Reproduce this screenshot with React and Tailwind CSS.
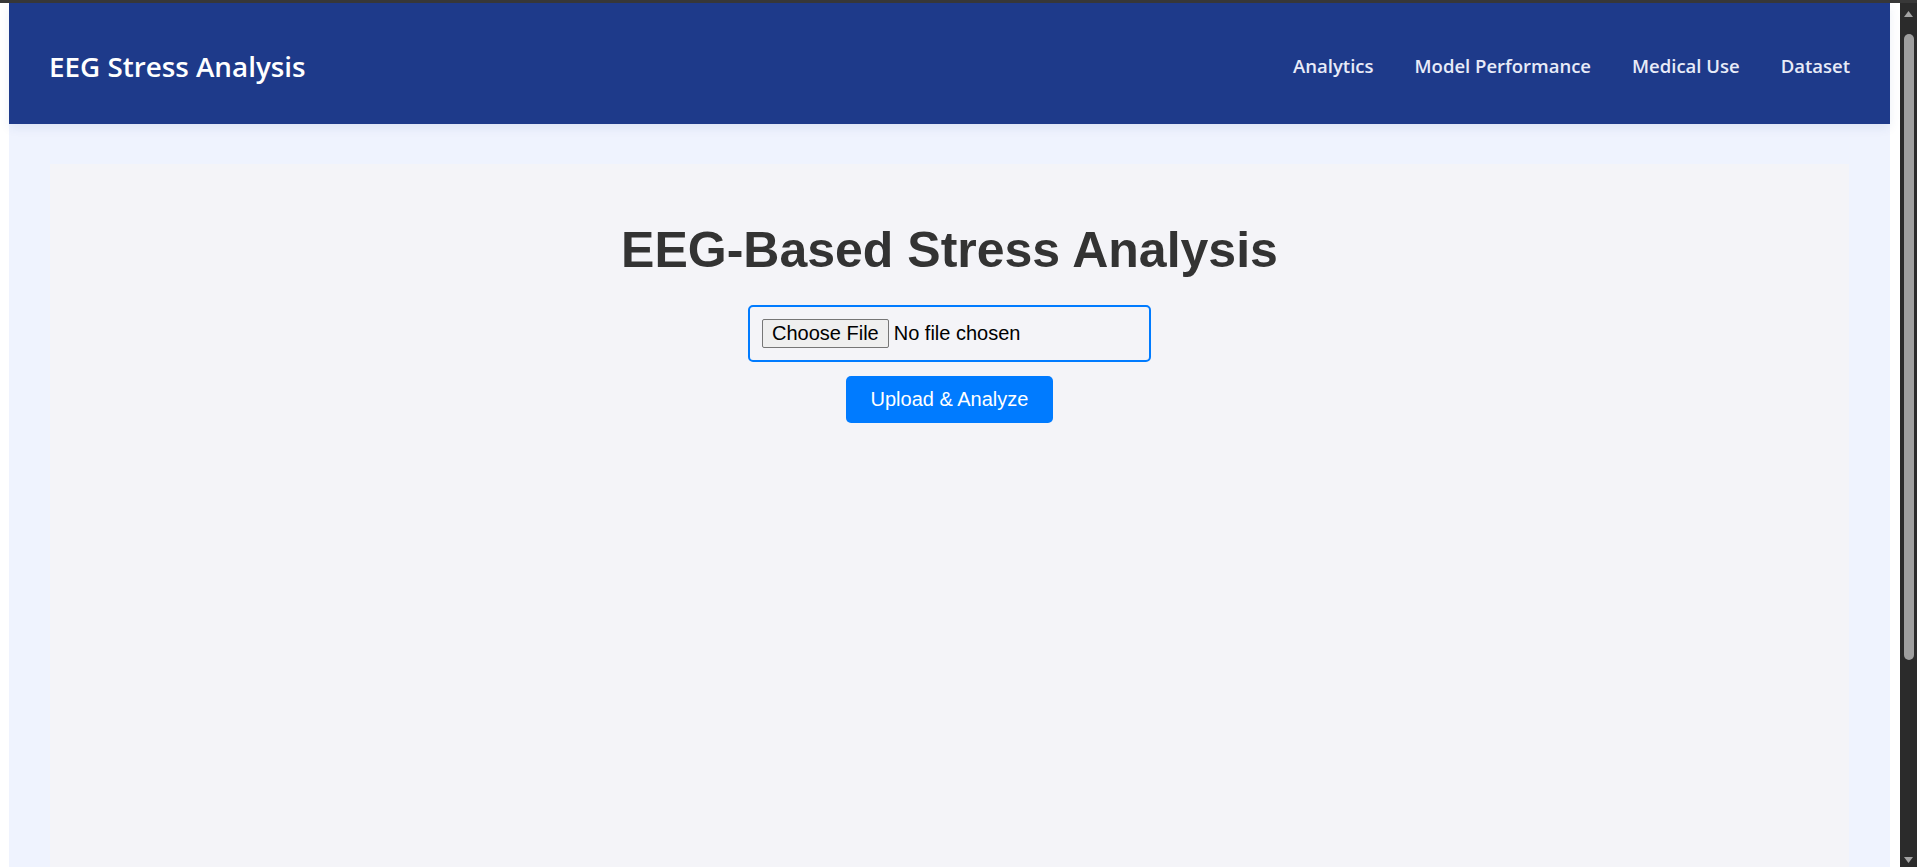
const navLinks = ['Analytics', 'Model Performance', 'Medical Use', 'Dataset'];

const Scrollbar = () => (
  <div className="w-[17px] bg-[#2b2b2b] flex flex-col items-center">
    <svg className="mt-[8px] w-[9px] h-[6px]" viewBox="0 0 9 6">
      <path d="M4.5 0L9 6H0z" fill="#a3a3a3" />
    </svg>
    <div className="mt-[17px] w-[10px] h-[626px] rounded-full bg-[#9f9f9f]" />
    <div className="flex-1" />
    <svg className="mb-[4px] w-[9px] h-[6px]" viewBox="0 0 9 6">
      <path d="M0 0h9L4.5 6z" fill="#a3a3a3" />
    </svg>
  </div>
);

const App = () => {
  return (
    <div className="h-screen overflow-hidden flex flex-col bg-white">
      {/* browser frame edge */}
      <div className="h-[3px] bg-[#383838]" />

      <div className="flex-1 flex min-h-0">
        <div className="w-[9px] bg-white" />

        <div className="flex-1 flex flex-col bg-[#eff3fe] min-h-0">
          {/* Header */}
          <header className="relative z-10 h-[121px] shrink-0 bg-[#1e3a8a] px-10 flex items-center justify-between shadow-[0_4px_10px_rgba(30,58,138,0.08)] font-['Open_Sans',sans-serif]">
            <h1 className="text-white text-[27.8px] leading-[36px] font-semibold pt-[5px]">
              EEG Stress Analysis
            </h1>
            <nav className="flex items-center gap-[41px] pt-[5px]">
              {navLinks.map((link) => (
                <a
                  key={link}
                  href="#"
                  className="text-[#e8ebf8] text-[18.5px] font-semibold"
                >
                  {link}
                </a>
              ))}
            </nav>
          </header>

          {/* Main */}
          <main className="flex-1 flex flex-col px-[41px] pt-10 min-h-0">
            <div className="flex-1 bg-[#f4f4f8] flex flex-col items-center pt-[58px] font-['Liberation_Sans',Arial,sans-serif]">
              <h2 className="text-[50px] leading-[57px] font-bold text-[#333333]">
                EEG-Based Stress Analysis
              </h2>

              <div className="mt-[26px] w-[403px] h-[57px] border-2 border-[#007bff] rounded-[5px] px-[12px] flex items-center">
                <input
                  type="file"
                  className="text-[20px] leading-[23px] text-black w-full file:bg-[#efefef] file:border file:border-[#767676] file:rounded-[2px] file:px-[9px] file:py-[2px] file:mr-[5px] file:text-black"
                />
              </div>

              <button className="mt-[14px] bg-[#007bff] text-white text-[20px] leading-[23px] px-[25px] py-3 rounded-[5px]">
                Upload &amp; Analyze
              </button>
            </div>
          </main>
        </div>

        <div className="w-[10px] bg-white" />
        <Scrollbar />
      </div>
    </div>
  );
};

export default App;
